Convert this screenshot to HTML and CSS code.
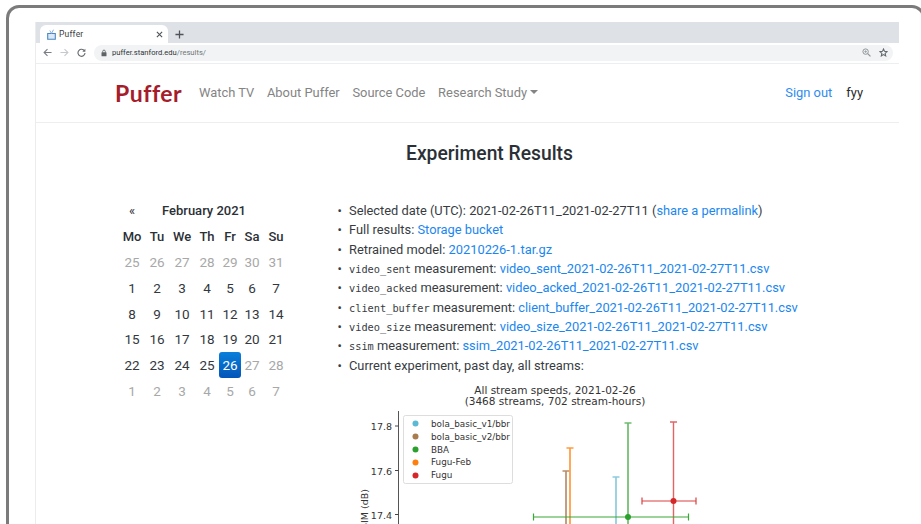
FILE: index.html
```html
<!DOCTYPE html>
<html lang="en">
<head>
<meta charset="utf-8">
<title>Puffer</title>
<link rel="stylesheet" href="styles.css">
</head>
<body>
<div class="frame">
  <div class="window">
    <div class="tabstrip">
      <div class="tab">
        <svg class="favicon" width="9" height="11" viewBox="0 0 9 11"><path d="M.7 4.500h7.600v5.800H.7z" fill="#dbe8f5" stroke="#4a86c5" stroke-width="1.100"/><path d="M2.800 1.500l1.700 3 2-3.800" fill="none" stroke="#7fa6d0" stroke-width=".9"/></svg>
        <span class="tab-title">Puffer</span>
        <svg class="tab-close" width="7" height="7" viewBox="0 0 8 8"><path d="M1 1l6 6M7 1l-6 6" stroke="#50545a" stroke-width="1.300"/></svg>
      </div>
      <svg class="new-tab" width="9" height="9" viewBox="0 0 10 10"><path d="M5 .5v9M.5 5h9" stroke="#50545a" stroke-width="1.400"/></svg>
    </div>
    <div class="toolbar">
      <svg class="nav-icon" width="9" height="9" viewBox="0 0 10 10"><path d="M9.500 5H1.500M5 1.200L1.200 5 5 8.800" fill="none" stroke="#7a7e83" stroke-width="1.200"/></svg>
      <svg class="nav-icon" width="9" height="9" viewBox="0 0 10 10"><path d="M.5 5h8M5 1.200L8.800 5 5 8.800" fill="none" stroke="#c6c9cc" stroke-width="1.200"/></svg>
      <svg class="nav-icon" width="9" height="9" viewBox="0 0 10 10"><path d="M8.300 3.200A3.900 3.900 0 1 0 8.900 5.600" fill="none" stroke="#6a6e73" stroke-width="1.300"/><path d="M9.300.8v3.400H5.900z" fill="#6a6e73"/></svg>
      <div class="omnibox">
        <svg class="lock" width="6" height="8" viewBox="0 0 7 9"><path d="M2 4V2.600a1.500 1.500 0 0 1 3 0V4" fill="none" stroke="#5f6368"/><rect x=".6" y="3.600" width="5.800" height="4.800" rx=".6" fill="#5f6368"/></svg>
        <span class="url"><span class="url-host">puffer.stanford.edu</span>/results/</span>
        <span class="omni-spacer"></span>
        <svg width="9" height="9" viewBox="0 0 10 10"><circle cx="4" cy="4" r="3" fill="none" stroke="#909498" stroke-width="1.100"/><path d="M6.300 6.300L9.400 9.400" stroke="#909498" stroke-width="1.300"/><path d="M2.500 4h3M4 2.500v3" stroke="#909498" stroke-width=".8"/></svg>
        <svg class="star" width="9" height="9" viewBox="0 0 11 11"><path d="M5.500 1.200l1.300 2.900 3.100.3-2.400 2.100.7 3.100-2.700-1.600-2.700 1.600.7-3.100L1.100 4.400l3.100-.3z" fill="none" stroke="#62666b" stroke-width="1.300"/></svg>
      </div>
    </div>
    <nav class="navbar">
      <span class="brand">Puffer</span>
      <a class="nav-link">Watch TV</a>
      <a class="nav-link">About Puffer</a>
      <a class="nav-link">Source Code</a>
      <a class="nav-link">Research Study<span class="caret"></span></a>
      <span class="nav-spacer"></span>
      <a class="sign-out">Sign out</a>
      <span class="user">fyy</span>
    </nav>
    <h1 class="page-title">Experiment Results</h1>
    <div class="results">
      <table class="calendar">
        <thead>
          <tr class="cal-head"><th class="prev">«</th><th colspan="5">February 2021</th><th></th></tr>
          <tr class="cal-days"><th>Mo</th><th>Tu</th><th>We</th><th>Th</th><th>Fr</th><th>Sa</th><th>Su</th></tr>
        </thead>
        <tbody>
          <tr class="muted"><td>25</td><td>26</td><td>27</td><td>28</td><td>29</td><td>30</td><td>31</td></tr>
          <tr><td>1</td><td>2</td><td>3</td><td>4</td><td>5</td><td>6</td><td>7</td></tr>
          <tr><td>8</td><td>9</td><td>10</td><td>11</td><td>12</td><td>13</td><td>14</td></tr>
          <tr><td>15</td><td>16</td><td>17</td><td>18</td><td>19</td><td>20</td><td>21</td></tr>
          <tr><td>22</td><td>23</td><td>24</td><td>25</td><td class="active">26</td><td class="off">27</td><td class="off">28</td></tr>
          <tr class="muted"><td>1</td><td>2</td><td>3</td><td>4</td><td>5</td><td>6</td><td>7</td></tr>
        </tbody>
      </table>
      <div class="details">
        <ul class="files">
          <li>Selected date (UTC): 2021-02-26T11_2021-02-27T11 (<a>share a permalink</a>)</li>
          <li>Full results: <a>Storage bucket</a></li>
          <li>Retrained model: <a>20210226-1.tar.gz</a></li>
          <li><code>video_sent</code> measurement: <a>video_sent_2021-02-26T11_2021-02-27T11.csv</a></li>
          <li><code>video_acked</code> measurement: <a>video_acked_2021-02-26T11_2021-02-27T11.csv</a></li>
          <li><code>client_buffer</code> measurement: <a>client_buffer_2021-02-26T11_2021-02-27T11.csv</a></li>
          <li><code>video_size</code> measurement: <a>video_size_2021-02-26T11_2021-02-27T11.csv</a></li>
          <li><code>ssim</code> measurement: <a>ssim_2021-02-26T11_2021-02-27T11.csv</a></li>
          <li>Current experiment, past day, all streams:</li>
        </ul>
        <svg class="chart" width="400" height="150" viewBox="336 375 400 150">
          <g class="chart-text">
            <text x="555" y="394" text-anchor="middle">All stream speeds, 2021-02-26</text>
            <text x="555" y="405" text-anchor="middle">(3468 streams, 702 stream-hours)</text>
          </g>
          <path d="M398.500 411V525" stroke="#555" stroke-width="1"/>
          <path d="M395 426h3.500M395 470.500h3.500M395 514.500h3.500" stroke="#444" stroke-width="1"/>
          <g class="chart-tick">
            <text x="392" y="430" text-anchor="end">17.8</text>
            <text x="392" y="474.500" text-anchor="end">17.6</text>
            <text x="392" y="518.500" text-anchor="end">17.4</text>
            <text transform="translate(368 512) rotate(-90)" text-anchor="middle">SSIM (dB)</text>
          </g>
          <rect x="403.500" y="415.500" width="109" height="68" rx="2" fill="#fff" stroke="#ddd"/>
          <circle cx="415.500" cy="423.500" r="3" fill="#5bb9d5"/>
          <circle cx="415.500" cy="436.500" r="3" fill="#a97c50"/>
          <circle cx="415.500" cy="449.500" r="3" fill="#2ca02c"/>
          <circle cx="415.500" cy="462.500" r="3" fill="#ff7f0e"/>
          <circle cx="415.500" cy="475.500" r="3" fill="#d62728"/>
          <g class="chart-legend">
            <text x="431" y="426.500">bola_basic_v1/bbr</text>
            <text x="431" y="439.500">bola_basic_v2/bbr</text>
            <text x="431" y="452.500">BBA</text>
            <text x="431" y="465">Fugu-Feb</text>
            <text x="431" y="478">Fugu</text>
          </g>
          <g fill="none">
            <path d="M566 471V525M562.500 471h7" stroke="#b98f6b" stroke-width="1.700"/>
            <path d="M570 448V525M566.500 448h7" stroke="#ff9a3d" stroke-width="1.700"/>
            <path d="M616 477V525M612.500 477h7" stroke="#8cccdf" stroke-width="1.700"/>
            <path d="M628 423V525M624.500 423h7" stroke="#6dbd6d" stroke-width="1.700"/>
            <path d="M673.500 422V525M670 422h7" stroke="#e26465" stroke-width="1.400"/>
            <path d="M533.500 517H688.500M533.500 513.500v7M688.500 513.500v7" stroke="#38a838" stroke-width="1.200"/>
            <path d="M642 501H696M642 497.500v7M696 497.500v7" stroke="#dc3f40" stroke-width="1.200"/>
          </g>
          <circle cx="628" cy="517" r="3" fill="#2ca02c"/>
          <circle cx="673.500" cy="501" r="3" fill="#d62728"/>
        </svg>
      </div>
    </div>
  </div>
</div>
</body>
</html>
```
FILE: styles.css
```css
* { box-sizing: border-box; }

html, body {
  margin: 0;
  height: 524px;
  overflow: hidden;
  background: #fff;
}

body {
  padding: 5px 0 0 6px;
  font-family: Roboto, "Liberation Sans", sans-serif;
  font-size: 13px;
  color: #333840;
}

/* Laptop bezel around the browser */
.frame {
  height: 519px;
  margin-right: -4px;
  padding: 14px 0 0 26px;
  border: 3px solid #7b7b7b;
  border-bottom: 0;
  border-radius: 13px 13px 0 0;
}

.window {
  width: 864px;
  height: 510px;
  border-left: 1px solid #ececec;
  overflow: hidden;
}

/* Browser chrome */
.tabstrip {
  display: flex;
  align-items: flex-end;
  height: 21px;
  padding-left: 4px;
  background: #dee1e6;
}

.tab {
  display: flex;
  align-items: center;
  width: 128px;
  height: 18px;
  padding: 0 5px 0 7px;
  background: #fff;
  border-radius: 6px 6px 0 0;
}

.tab-title {
  flex: 1;
  margin-left: 3px;
  font-size: 8.500px;
  letter-spacing: .2px;
  color: #3c4043;
}

.new-tab { margin: 0 0 4px 7px; }

.toolbar {
  display: flex;
  align-items: center;
  gap: 7px;
  height: 21px;
  padding: 0 6px 1px 7px;
  background: #fff;
  border-bottom: 1px solid #eceef0;
}

.nav-icon { margin-right: 1px; }

.omnibox {
  flex: 1;
  display: flex;
  align-items: center;
  height: 16px;
  padding: 0 5px 0 7px;
  background: #f1f3f4;
  border-radius: 8px;
}

.url {
  margin-left: 5px;
  font-size: 7.600px;
  color: #70757a;
}

.url-host { color: #30343a; }

.omni-spacer { flex: 1; }

.star { margin-left: 8px; }

/* Site navigation */
.navbar {
  display: flex;
  align-items: center;
  height: 59px;
  padding: 0 36px 1px 79px;
  border-bottom: 1px solid #eeeeee;
  font-size: 12.900px;
}

.brand {
  width: 84px;
  font-family: Lato, sans-serif;
  font-size: 23px;
  font-weight: 700;
  letter-spacing: .5px;
  color: #a51c2b;
}

.nav-link {
  margin-right: 12.700px;
  color: #848484;
}

.caret {
  display: inline-block;
  margin-left: 3px;
  vertical-align: 3px;
  border-top: 4px solid #848484;
  border-left: 4px solid transparent;
  border-right: 4px solid transparent;
}

.nav-spacer { flex: 1; }

.sign-out {
  margin-right: 14px;
  color: #2d8cf0;
}

.user { color: #2b2b2b; }

.page-title {
  margin: 19px 0 0;
  padding-left: 44px;
  font-size: 19.300px;
  font-weight: 500;
  line-height: 24px;
  text-align: center;
  color: #2b3036;
}

/* Calendar and results list */
.results {
  display: flex;
  padding: 32px 0 0 83px;
}

.calendar {
  align-self: flex-start;
  border-collapse: separate;
  border-spacing: 0;
  text-align: center;
  font-size: 13.500px;
}

.calendar th, .calendar td {
  height: 25.700px;
  padding: 0;
}

.cal-days th:nth-child(1) { width: 26px; }
.cal-days th:nth-child(2) { width: 24px; }
.cal-days th:nth-child(3) { width: 26px; }
.cal-days th:nth-child(4) { width: 24px; }
.cal-days th:nth-child(5) { width: 22px; }
.cal-days th:nth-child(6) { width: 22px; }
.cal-days th:nth-child(7) { width: 26px; }

.cal-head th, .cal-days th {
  font-weight: 500;
  font-size: 13px;
  color: #2b3036;
}

.calendar .prev { font-weight: 400; }

.muted td, .calendar .off { color: #a8a8a8; }

.calendar .active {
  color: #fff;
  background: linear-gradient(#0a7fdb, #0355b8);
  border-radius: 3px;
}

.details {
  margin-left: 47px;
  padding-top: 3px;
}

.files {
  margin: 0;
  padding: 0 0 0 13px;
  list-style: none;
  font-size: 12.850px;
  white-space: nowrap;
  color: #383c42;
}

.files li {
  height: 19.350px;
  line-height: 19.350px;
}

.files li::before {
  content: "•";
  display: inline-block;
  width: 11.500px;
  margin-left: -11.500px;
}

.files a { color: #1a86f0; }

code {
  font-family: "DejaVu Sans Mono", monospace;
  font-size: 10.300px;
  line-height: 1;
}

.chart { display: block; }

.chart-text text {
  font-family: "DejaVu Sans", sans-serif;
  font-size: 10.500px;
  fill: #333;
}

.chart-tick text {
  font-family: "DejaVu Sans", sans-serif;
  font-size: 9.500px;
  fill: #333;
}

.chart-legend text {
  font-family: "DejaVu Sans", sans-serif;
  font-size: 8.800px;
  fill: #333;
}
```
